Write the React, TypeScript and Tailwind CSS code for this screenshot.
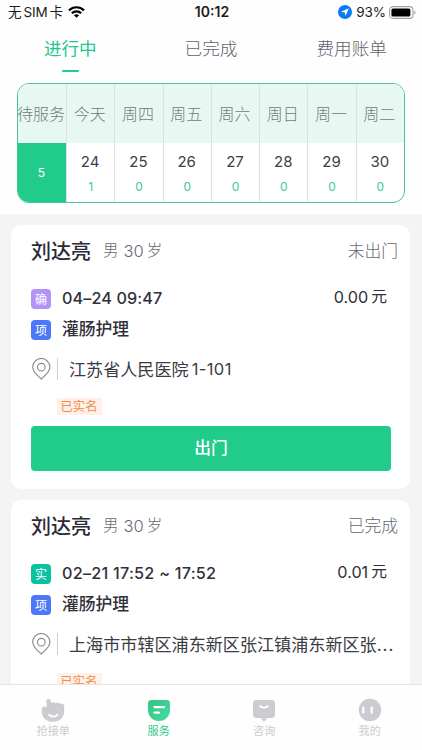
interface Order {
  name: string;
  status: string;
  tag: string;
  tagClass: string;
  time: string;
  timeClass: string;
  price: string;
  service: string;
  address: string;
  room?: string;
  action?: string;
}

const tabs = ["进行中", "已完成", "费用账单"];

const days = [
  { label: "今天", date: "24", count: 1 },
  { label: "周四", date: "25", count: 0 },
  { label: "周五", date: "26", count: 0 },
  { label: "周六", date: "27", count: 0 },
  { label: "周日", date: "28", count: 0 },
  { label: "周一", date: "29", count: 0 },
  { label: "周二", date: "30", count: 0 },
];

const orders: Order[] = [
  {
    name: "刘达亮",
    status: "未出门",
    tag: "确",
    tagClass: "bg-[#b393fa]",
    time: "04–24 09:47",
    timeClass: "tracking-[0.1px]",
    price: "0.00",
    service: "灌肠护理",
    address: "江苏省人民医院",
    room: "1-101",
    action: "出门",
  },
  {
    name: "刘达亮",
    status: "已完成",
    tag: "实",
    tagClass: "bg-[#08c2a2]",
    time: "02–21 17:52 ~ 17:52",
    timeClass: "tracking-[0.25px]",
    price: "0.01",
    service: "灌肠护理",
    address: "上海市市辖区浦东新区张江镇浦东新区张...",
  },
];

function StatusBar() {
  return (
    <div className="grid h-6 grid-cols-3 items-center pl-2 pr-[6px] text-[13.5px] leading-6 text-[#1c1c1c]">
      <div className="flex items-center">
        <span>无</span>
        <span className="ml-[2px] tracking-[-0.2px]">SIM</span>
        <span className="ml-[2px]">卡</span>
        <svg className="ml-[5px] h-[12px] w-[17px]" viewBox="0 0 17 12" fill="none" stroke="#000" strokeWidth="2.2">
          <path d="M1 4.4C5.2.2 11.8.2 16 4.4" />
          <path d="M3.8 7.3c2.7-2.6 6.7-2.6 9.4 0" />
          <path d="M8.5 11.8 5.9 9.2c1.5-1.4 3.7-1.4 5.2 0z" fill="#000" stroke="none" />
        </svg>
      </div>
      <div className="text-center text-[14px] font-semibold">10:12</div>
      <div className="flex items-center justify-end">
        <svg className="h-[14px] w-[14px]" viewBox="0 0 14 14">
          <circle cx="7" cy="7" r="7" fill="#0a7af7" />
          <path d="M10.9 3.2 7.5 11 6.7 7.4 3 6.7z" fill="#fff" />
        </svg>
        <span className="ml-[4px] text-[13.5px] tracking-[-0.1px]">93%</span>
        <svg className="ml-[3px] h-[13px] w-[27px]" viewBox="0 0 27 13">
          <rect x=".6" y=".6" width="23.4" height="11.8" rx="3.4" fill="none" stroke="#a0a0a0" strokeWidth="1.1" />
          <rect x="2.4" y="2.4" width="19" height="8.2" rx="1.6" fill="#000" />
          <path d="M25.3 4.5c1.6.8 1.6 3.2 0 4z" fill="#a0a0a0" />
        </svg>
      </div>
    </div>
  );
}

function Calendar() {
  return (
    <div className="ml-[17px] flex h-[120px] w-[388px] overflow-hidden rounded-[12px] border border-[#48c590] bg-white">
      <div className="w-[48px] shrink-0">
        <div className="flex h-[59px] items-center justify-center whitespace-nowrap bg-[#e7f8f2] text-[16px] font-light text-[#747c78]">
          <span className="-ml-[2px]">待服务</span>
        </div>
        <div className="flex h-[60px] items-center justify-center bg-[#20cb8b] pr-px text-[12px] text-white">5</div>
      </div>
      {days.map((day) => (
        <div key={day.date} className="flex-1 border-l border-[#dbe3e0]">
          <div className="flex h-[59px] items-center justify-center bg-[#e7f8f2] pr-[2px] text-[16px] font-light text-[#747c78]">
            {day.label}
          </div>
          <div className="flex flex-col items-center pt-[9px]">
            <span className="pr-px text-[15px] leading-5 text-[#3d3d47]">{day.date}</span>
            <span className="mt-[7px] text-[12px] leading-4 text-[#45c795]">{day.count}</span>
          </div>
        </div>
      ))}
    </div>
  );
}

function Tag({ text, className }: { text: string; className: string }) {
  return (
    <span className={`flex h-5 w-5 shrink-0 items-center justify-center rounded-[4px] pt-px text-[12px] text-white ${className}`}>
      {text}
    </span>
  );
}

function OrderCard({ order }: { order: Order }) {
  return (
    <div className="ml-[11px] mr-3 h-[264px] rounded-[11px] bg-white pl-5 pr-[19px] pt-3">
      {/* Header */}
      <div className="-mr-[7px] flex h-[30px] items-center">
        <span className="text-[20px] font-medium text-[#2b2b36]">{order.name}</span>
        <span className="-mt-px ml-[12px] flex text-[15.5px] font-light text-[#666872]">
          男<span className="ml-[5px] mr-[3px] text-[16.5px]">30</span>岁
        </span>
        <span className="ml-auto text-[16.8px] font-light text-[#666872]">{order.status}</span>
      </div>

      {/* Time and price */}
      <div className="mt-[20px] flex h-6 items-center">
        <Tag text={order.tag} className={order.tagClass} />
        <span className={`-mt-[2px] ml-[11px] text-[16.2px] font-medium text-[#30303b] ${order.timeClass}`}>{order.time}</span>
        <span className="-mt-[4px] ml-auto mr-[4px] flex items-center text-[16.2px] text-[#30303b]">
          {order.price}
          <span className="ml-[3px] text-[15.8px]">元</span>
        </span>
      </div>

      {/* Service */}
      <div className="mt-[7px] flex h-6 items-center">
        <Tag text="项" className="bg-[#4a78f8]" />
        <span className="ml-[11px] text-[16.8px] font-medium text-[#30303b]">{order.service}</span>
      </div>

      {/* Address */}
      <div className="mt-[15px] flex h-6 items-center">
        <svg className="h-[22px] w-5 shrink-0" viewBox="0 0 20 22" fill="none" stroke="#85858c" strokeWidth="1.1">
          <path d="M10.3 21C7.5 18.4 1.7 14.4 1.7 9.1a8.6 8.6 0 0 1 17.2 0c0 5.3-5.8 9.3-8.6 11.9z" />
          <circle cx="10.3" cy="9.2" r="3.8" />
        </svg>
        <span className="ml-[6px] h-[22px] border-l border-[#cfcfd3]" />
        <span className="ml-[11px] mt-px flex shrink-0 whitespace-nowrap text-[17.1px] text-[#3b3b44]">
          {order.address.replace("...", "")}
          {order.address.endsWith("...") && <span className="tracking-[1px]">...</span>}
          {order.room && <span className="ml-[3px] text-[16.5px] tracking-[0.4px]">{order.room}</span>}
        </span>
      </div>

      <div className="ml-[26px] mt-[17px] flex h-[17px] w-[45px] items-center justify-center bg-[#fff1e8] pr-px text-[12.3px] leading-[17px] text-[#f28c4b]">
        已实名
      </div>

      {order.action && (
        <button className="mt-[11px] flex h-[45px] w-[360px] items-center justify-center rounded-[4px] bg-[#20cb8b] pt-px text-[16.8px] font-medium text-white">
          {order.action}
        </button>
      )}
    </div>
  );
}

function GrabIcon() {
  return (
    <svg className="h-6 w-6" viewBox="0 0 24 24">
      <path
        d="M5.2 3.1C5.2.3 9.6.2 9.9 3L10.4 5.2C11 3.8 13.8 3.9 14.4 5.3C15.5 4.1 18 4.4 18.5 6C20.2 4.9 23.2 5.7 23.2 8.3V13C23.2 19.3 18.5 23.8 12.2 23.8C5.8 23.8 1 20 .8 14.2C.6 12.3.6 10.2 1.7 9.3C2.9 8.3 4.6 8.5 5.8 9.3Z"
        fill="#cbccd1"
      />
      <path d="M8.2 16.8c1.900 2.200 6.200 2.200 8.100 0" fill="none" stroke="#fff" strokeWidth="2" strokeLinecap="round" />
    </svg>
  );
}

function ServiceIcon() {
  return (
    <svg className="h-6 w-6" viewBox="0 0 24 24">
      <defs>
        <linearGradient id="service" x1="0" y1="0" x2="1" y2="1">
          <stop offset="0" stopColor="#35c184" />
          <stop offset="1" stopColor="#48dda3" />
        </linearGradient>
      </defs>
      <path d="M4.3 2h15.4c2 0 3.3 1.3 3.3 3.3V12c0 6.300-4.600 11-11 11S1 18.300 1 12V5.300C1 3.300 2.300 2 4.300 2z" fill="url(#service)" />
      <path d="M7.500 9.200h9.500M7.500 14.600h4.500" stroke="#fff" strokeWidth="2.2" strokeLinecap="round" />
    </svg>
  );
}

function ChatIcon() {
  return (
    <svg className="h-6 w-6" viewBox="0 0 24 24">
      <path
        d="M4.5 2h15C21.8 2 23 3.2 23 5.500v11c0 2.300-1.200 3.500-3.500 3.500H15l-3 4-3-4H4.500C2.200 20 1 18.800 1 16.500v-11C1 3.200 2.200 2 4.500 2z"
        fill="#cbccd1"
      />
      <path d="M8 8.2c1.500 1.800 6.500 1.800 8 0" fill="none" stroke="#fff" strokeWidth="2" strokeLinecap="round" />
    </svg>
  );
}

function MineIcon() {
  return (
    <svg className="h-6 w-6" viewBox="0 0 24 24">
      <circle cx="12" cy="12" r="11.2" fill="#cbccd1" />
      <path d="M5.300 9.700v5M13.700 9.700v5" stroke="#fff" strokeWidth="2.2" strokeLinecap="round" />
    </svg>
  );
}

const navItems = [
  { label: "抢接单", icon: <GrabIcon /> },
  { label: "服务", icon: <ServiceIcon />, active: true },
  { label: "咨询", icon: <ChatIcon /> },
  { label: "我的", icon: <MineIcon /> },
];

export default function App() {
  return (
    <div className="flex h-[750px] w-[422px] flex-col overflow-hidden bg-[#f4f4f4] font-['Inter','Noto_Sans_CJK_SC',sans-serif]">
      <div className="h-[214px] shrink-0 bg-[#fefefe]">
        <StatusBar />
        <div className="grid h-[59px] grid-cols-3">
          {tabs.map((tab, i) => (
            <div
              key={tab}
              className={`flex flex-col items-center pt-[13px] text-[17.6px] leading-6 ${
                i === 0 ? "text-[#25c68b]" : "font-light text-[#60636b]"
              }`}
            >
              {tab}
              {i === 0 && <span className="mt-[9px] h-[2px] w-[17px] rounded-full bg-[#20cb8b]" />}
            </div>
          ))}
        </div>
        <Calendar />
      </div>

      <main className="flex min-h-0 flex-1 flex-col gap-[11px] overflow-hidden pt-[11px]">
        {orders.map((order) => (
          <div key={order.time} className="shrink-0">
            <OrderCard order={order} />
          </div>
        ))}
      </main>

      <nav className="grid h-[66px] shrink-0 grid-cols-4 border-t border-[#e6e6e6] bg-[#fefefe]">
        {navItems.map((item) => (
          <div key={item.label} className="flex flex-col items-center pl-px pt-[13px]">
            {item.icon}
            <span className={`mt-px text-[11.2px] leading-4 ${item.active ? "text-[#35c68d]" : "text-[#cbccd1]"}`}>
              {item.label}
            </span>
          </div>
        ))}
      </nav>
    </div>
  );
}
